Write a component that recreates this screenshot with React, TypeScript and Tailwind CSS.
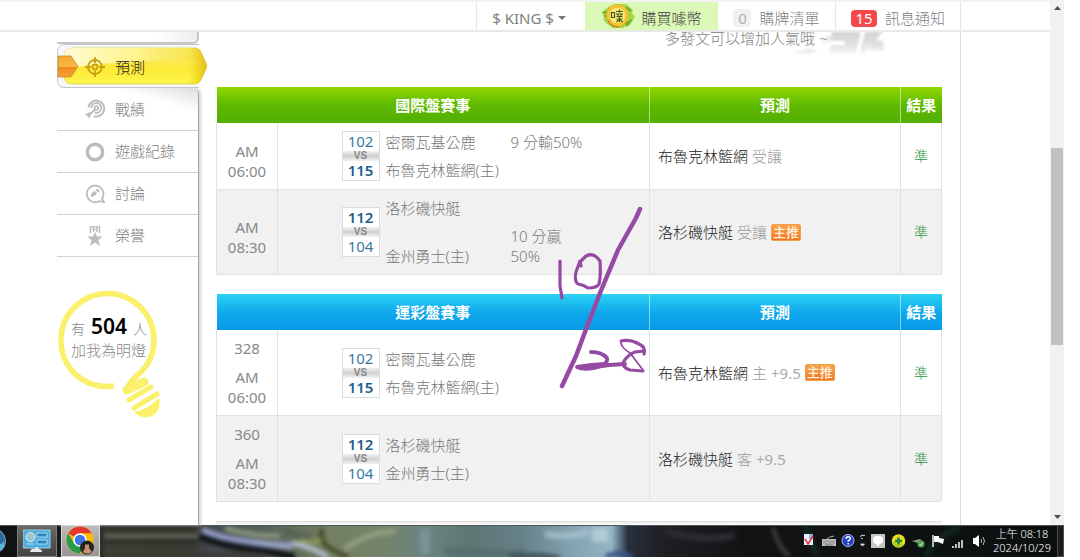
import React from "react";

type Match = {
  no?: string;
  time: string;
  away: string;
  home: string;
  awayScore: number;
  homeScore: number;
  note?: string;
  noteOnHome?: boolean;
  pick: string;
  side: string;
  line?: string;
  main?: boolean;
};

const international: Match[] = [
  { time: "06:00", away: "密爾瓦基公鹿", home: "布魯克林籃網(主)", awayScore: 102, homeScore: 115, note: "9 分輸50%", pick: "布魯克林籃網", side: "受讓" },
  { time: "08:30", away: "洛杉磯快艇", home: "金州勇士(主)", awayScore: 112, homeScore: 104, note: "10 分贏 50%", noteOnHome: true, pick: "洛杉磯快艇", side: "受讓", main: true },
];

const lottery: Match[] = [
  { no: "328", time: "06:00", away: "密爾瓦基公鹿", home: "布魯克林籃網(主)", awayScore: 102, homeScore: 115, pick: "布魯克林籃網", side: "主", line: "+9.5", main: true },
  { no: "360", time: "08:30", away: "洛杉磯快艇", home: "金州勇士(主)", awayScore: 112, homeScore: 104, pick: "洛杉磯快艇", side: "客", line: "+9.5" },
];

function CoinIcon() {
  return (
    <svg width="34" height="28" viewBox="0 0 34 28" aria-hidden="true">
      <path d="M1 10l6-5 8-3 10 0 7 6-1 3 3 4-4 6-8 5-10 0-6-4-4-5 1-2z" fill="#a5d84c" />
      <path d="M2 11l7-2M3 14l6 0M24 22l7-4M25 24l4-3M25 5l5 4" stroke="#6fae25" strokeWidth="2" />
      <circle cx="16.500" cy="13.500" r="11" fill="#f4cf35" stroke="#e0ac24" />
      <circle cx="16.500" cy="13.500" r="8.500" fill="#f8ea74" stroke="#ecb42a" />
      <path d="M7 18q3 7 11 7" stroke="#d97c1f" strokeWidth="1.500" fill="none" />
      <g stroke="#46521f" strokeWidth="1.200" fill="none">
        <path d="M10.500 10.500h3v5h-3zM15 9.500h7M18.500 7.500v3M15 12h7M15.500 14.500h6M17 12v3M20 12v3M18.500 15v5M15.500 17h6M15.500 20l2-2M21.500 20l-2-2" />
      </g>
    </svg>
  );
}

function Header() {
  return (
    <header className="relative z-20 flex h-8 justify-end border-t-2 border-b-2 border-t-[#f2f2f2] border-b-[#e9e9e9] bg-white pr-[89px] text-[15px] text-[#808080]">
      <nav className="flex" aria-label="會員選單">
        <button type="button" className="flex w-[109px] items-center justify-center gap-1 border-l border-[#e6e6e6] pt-1 pr-1 font-normal">
          $ KING $
          <svg width="8" height="4" viewBox="0 0 8 4" aria-hidden="true"><path d="M0 0h8L4 4z" fill="#777" /></svg>
        </button>
        <a href="#coins" className="flex w-[133px] items-center justify-center gap-1.5 bg-[#dcf8b6] text-[#444]">
          <CoinIcon />
          <span className="pt-1">購買噱幣</span>
        </a>
        <a href="#list" className="flex w-[117px] items-center justify-center gap-2 pt-1">
          <span className="w-[18px] rounded bg-[#f1f1f1] text-center leading-[18px] font-normal text-[#b0b0b0]">0</span>
          購牌清單
        </a>
        <a href="#messages" className="flex w-[126px] items-center justify-center gap-2 border-x border-[#e6e6e6] pt-1">
          <span className="w-[26px] rounded bg-[#f4484c] text-center leading-[17px] font-normal text-white">15</span>
          訊息通知
        </a>
      </nav>
    </header>
  );
}

function NavIcon({ name }: { name: string }) {
  return (
    <svg width="20" height="20" viewBox="0 0 20 20" fill="none" stroke="#bcbcbc" strokeWidth="1.800" className="shrink-0" aria-hidden="true">
      {name === "預測" && (
        <g stroke="#c9a211">
          <circle cx="10" cy="10" r="7" />
          <circle cx="10" cy="10" r="2.500" />
          <path d="M10 0v6M10 14v6M0 10h6M14 10h6" />
        </g>
      )}
      {name === "戰績" && (
        <g>
          <path d="M3.300 8.500a8 8 0 1 1 5.500 8.700" strokeWidth="2" />
          <path d="M6.300 9a5 5 0 1 1 3.500 4.700" />
          <circle cx="11.300" cy="9" r="1.800" />
          <path d="M10.500 10.500L5 15" />
          <path d="M0 15.500l5-2.500 1.500 1.500-2 5-1.500-2z" fill="#bcbcbc" stroke="none" />
        </g>
      )}
      {name === "遊戲紀錄" && <circle cx="10" cy="10" r="7.700" strokeWidth="3.500" />}
      {name === "討論" && (
        <g>
          <path d="M17 14.500A8.300 8.300 0 1 0 14 17.200l5 1z" />
          <path d="M5.500 13l1-3.500 3-2.800 2.600 2.600-3 2.900zM10.500 6l1.800-1.500L15 7l-1.800 1.600z" fill="#bcbcbc" stroke="none" />
        </g>
      )}
      {name === "榮譽" && (
        <g>
          <path d="M5.500 0v7M8.500 0v6M12 0v6M14.500 0v7" strokeWidth="1.500" />
          <path d="M6 1h8M8 3.500h4" strokeWidth="1" />
          <path d="M10 6l2 4.600h5.500l-4.200 3.600 1.700 5.800-5-3.500L5 20l1.700-5.800-4.200-3.600H8z" fill="#bcbcbc" stroke="none" />
        </g>
      )}
    </svg>
  );
}

function Ribbon() {
  return (
    <svg className="absolute top-0 left-0" width="152" height="44" viewBox="0 0 152 44" aria-hidden="true">
      <defs>
        <linearGradient id="gold" x1="0" y1="0" x2="0" y2="1">
          <stop offset="0" stopColor="#fff168" />
          <stop offset=".4" stopColor="#fdea4c" />
          <stop offset=".55" stopColor="#fdea38" />
          <stop offset="1" stopColor="#fdf54a" />
        </linearGradient>
        <linearGradient id="glow" x1="0" y1="0" x2="1" y2="0">
          <stop offset="0" stopColor="#fffcd8" />
          <stop offset=".5" stopColor="#fff79c" stopOpacity=".8" />
          <stop offset="1" stopColor="#f3d93a" stopOpacity=".5" />
        </linearGradient>
        <linearGradient id="tip" x1="0" y1="0" x2="1" y2="0">
          <stop offset="0" stopColor="#f0cf10" stopOpacity="0" />
          <stop offset="1" stopColor="#dcb40a" stopOpacity=".8" />
        </linearGradient>
        <linearGradient id="amber" x1="0" y1="0" x2="0" y2="1">
          <stop offset="0" stopColor="#f5a52e" />
          <stop offset=".5" stopColor="#fbb845" />
          <stop offset=".55" stopColor="#f08a1c" />
          <stop offset="1" stopColor="#f7a23a" />
        </linearGradient>
      </defs>
      <path d="M142 .5H8Q.5.500.5 8v28q0 7.500 7.500 7.500h134" fill="#f8f8fa" stroke="#c3c6cc" />
      <path d="M16 4h122q4 0 6 4l5 11q1.500 3 0 6l-5 11q-2 4-6 4H16q-9 0-9-9V13q0-9 9-9z" fill="url(#gold)" stroke="#dccb4a" strokeWidth=".8" />
      <path d="M16 4h122q4 0 6 4l4 9Q70 14 7 25V13q0-9 9-9z" fill="url(#glow)" />
      <path d="M130 4h8q4 0 6 4l5 11q1.500 3 0 6l-5 11q-2 4-6 4h-8z" fill="url(#tip)" />
      <path d="M1 12h13l7 10.500L14 33H1z" fill="url(#amber)" stroke="#c88a2c" strokeWidth=".8" />
    </svg>
  );
}

function Bulb() {
  return (
    <section className="relative mt-8 h-[128px] pt-[26px] pl-[14px] text-[#888]">
      <svg className="absolute top-0 left-0" width="106" height="130" viewBox="0 0 106 130" fill="none" stroke="#fbf06c" strokeWidth="5.500" aria-hidden="true">
        <path d="M57 97C26 101 4 78 4 51C4 25 25 4.500 50.500 4.500C76 4.500 97 25 97 51C97 66 91 76 84 83Q74 91 69 101" />
        <path d="M70 101l17-8" strokeWidth="9" strokeLinecap="round" />
        <path d="M72 111l22-13M77 119l23-14" strokeWidth="5" strokeLinecap="round" />
        <path d="M77 123q13-2 25-14 3 12-7 18-10 4-18-4z" fill="#fbf06c" stroke="none" />
      </svg>
      <p className="relative flex items-baseline gap-[6px] text-[14px] leading-[22px]">
        有 <strong className="text-[21px] font-semibold text-black">504</strong> 人
      </p>
      <p className="relative leading-5">加我為明燈</p>
    </section>
  );
}

function Sidebar() {
  return (
    <aside className="relative z-10 flex w-[142px] shrink-0 flex-col text-[15px] text-[#808080]">
      <div className="h-[12px] rounded-br-md border-r-2 border-b-2 border-[#c6c6c9] bg-linear-to-r from-white from-70% to-[#eeeef2]" />
      <nav aria-label="個人選單" className="contents">
        <a href="#predict" className="relative flex h-[44px] w-[152px] items-center text-[#222]">
          <Ribbon />
          <span className="relative flex items-center gap-[10px] pt-0.5 pl-[28px]">
            <NavIcon name="預測" />
            預測
          </span>
        </a>
        <div className="flex flex-1 flex-col rounded-tr-md border-r border-[#a9a9a9] bg-white shadow-[2px_0_3px_#d4d4d4]">
          {["戰績", "遊戲紀錄", "討論", "榮譽"].map((label, i) => (
            <a
              key={label}
              href={"#" + label}
              className={
                "flex items-center gap-[10px] border-b border-[#d2d2d2] pl-[28px] " +
                (i === 0 ? "h-[43px] rounded-tr-md bg-linear-to-bl from-[#dedee2] to-white to-30%" : "h-[42px]")
              }
            >
              <NavIcon name={label} />
              {label}
            </a>
          ))}
          <Bulb />
        </div>
      </nav>
    </aside>
  );
}

function ScoreBox({ top, bottom }: { top: number; bottom: number }) {
  return (
    <div className="w-[38px] shrink-0 border border-[#d9dde0] bg-white text-center">
      <div className={"leading-[19px] " + (top > bottom ? "font-semibold text-[#1d5f8c]" : "font-normal text-[#3c7a9f]")}>{top}</div>
      <div className="bg-linear-to-b from-[#f2f2f2] via-[#cfcfcf] to-[#f2f2f2] font-['Liberation_Sans'] text-[10px] leading-[10px] font-bold text-[#888]">VS</div>
      <div className={"leading-[19px] " + (bottom > top ? "font-semibold text-[#1d5f8c]" : "font-normal text-[#3c7a9f]")}>{bottom}</div>
    </div>
  );
}

function MatchTable({ title, rows, blue }: { title: string; rows: Match[]; blue?: boolean }) {
  return (
    <table className="w-full table-fixed border-collapse text-[15px] leading-5 text-[#777]">
      <colgroup>
        <col className="w-[61px]" />
        <col />
        <col className="w-[251px]" />
        <col className="w-[41px]" />
      </colgroup>
      <thead>
        <tr
          className={
            "h-9 text-white " +
            (blue
              ? "bg-linear-to-b from-[#2bd3f3] via-[#10a9ec] to-[#0799e6]"
              : "bg-linear-to-b from-[#91d800] via-[#5eb900] to-[#53af02]")
          }
        >
          <th colSpan={2} scope="colgroup" className="font-bold">{title}</th>
          <th scope="col" className="border-l border-white/50 font-bold">預測</th>
          <th scope="col" className="border-l border-white/50 font-bold">結果</th>
        </tr>
      </thead>
      <tbody>
        {rows.map((m) => (
          <tr key={m.time} className="even:bg-[#f1f1f1]">
            <td className="border border-t-0 border-[#e2e2e2] py-2 text-center font-normal text-[#888]">
              <div className="mb-[9px]">{m.no}</div>
              AM
              <br />
              {m.time}
            </td>
            <td className="border border-t-0 border-[#e2e2e2] py-2">
              <div className="flex items-center justify-center gap-[6px]">
                <ScoreBox top={m.awayScore} bottom={m.homeScore} />
                <div className="grid grid-cols-[125px_75px] items-end gap-y-2">
                  <span>{m.away}</span>
                  <span className="whitespace-nowrap">{!m.noteOnHome && m.note}</span>
                  <span>{m.home}</span>
                  <span>{m.noteOnHome && m.note}</span>
                </div>
              </div>
            </td>
            <td className="border border-t-0 border-[#e2e2e2] px-2">
              <div className="flex items-center gap-1">
                <span className="text-[#222]">{m.pick}</span>
                <span className="text-[#999]">{m.side}</span>
                {m.line && <span className="font-normal text-[#aaa]">{m.line}</span>}
                {m.main && (
                  <span className="rounded-xs border border-[#f3a04b] bg-linear-to-b from-[#f9a348] to-[#ef7420] px-px text-[13px] leading-[15px] font-medium text-[#fff3df]">
                    主推
                  </span>
                )}
              </div>
            </td>
            <td className="border border-t-0 border-[#e2e2e2] text-center text-[14px] text-[#2f9343]">準</td>
          </tr>
        ))}
      </tbody>
    </table>
  );
}

function Watermark() {
  return (
    <svg className="absolute top-0 right-[74px] blur-[1px]" width="94" height="26" viewBox="0 0 94 26" aria-hidden="true">
      <defs>
        <linearGradient id="fade" x1="0" y1="0" x2="0" y2="1">
          <stop offset="0" stopColor="#d3d3d3" />
          <stop offset=".6" stopColor="#e2e2e2" />
          <stop offset="1" stopColor="#fafafa" />
        </linearGradient>
      </defs>
      <g fill="url(#fade)">
        <path d="M40 0h29l-5 22H36l3-9h13l1-4H38z" />
        <path d="M73 0h18l-7 7 8 3-1 9H77l1-8-4 11h-7z" />
        <path d="M2 20l14-4 10 3-8 4H6z" opacity=".5" />
        <path d="M34 4h6l-3 8h-8z" opacity=".6" />
      </g>
    </svg>
  );
}

function HandwrittenDate() {
  return (
    <svg className="pointer-events-none absolute top-[206px] left-[552px] z-30" width="98" height="184" viewBox="0 0 98 184" fill="none" stroke="#954ba3" strokeWidth="3.200" strokeLinecap="round" strokeLinejoin="round" role="img" aria-label="10/28">
      <path d="M88 3L84 12L66 44L48 87L33 126L24 150L10 180" strokeWidth="4.500" />
      <path d="M8 55v25l2 12" />
      <path d="M29 60L28 55L24 66Q22 75 26 78Q32 79 36 82Q45 82 47 78Q49 70 48 55Q42 46 34 50L28 56" />
      <path d="M39 146Q50 146 55 152Q56 156 52 158L40 159L25 161Q33 165 50 160L57 159L73 158" strokeWidth="3.800" />
      <path d="M92 148Q94 141 87 138Q78 133 69 135" />
      <path d="M69 135Q68 141 78 147L91 164" strokeWidth="1.800" />
      <path d="M91 165L78 164Q69 161 72 155Q77 148 83 146L92 145" />
    </svg>
  );
}

function Scrollbar() {
  return (
    <div className="flex w-[14px] shrink-0 flex-col items-center bg-[#f1f1f1] py-[6px]" aria-hidden="true">
      <svg width="7" height="4" viewBox="0 0 7 4"><path d="M0 4h7L3.500 0z" fill="#505050" /></svg>
      <div className="flex w-full flex-1 flex-col px-px">
        <div className="flex-[138]" />
        <div className="flex-[197] bg-[#c1c1c1]" />
        <div className="flex-[170]" />
      </div>
      <svg width="7" height="4" viewBox="0 0 7 4"><path d="M0 0h7L3.500 4z" fill="#505050" /></svg>
    </div>
  );
}

function Wallpaper() {
  return (
    <svg className="absolute inset-0 h-full w-full" viewBox="0 0 1064 32" preserveAspectRatio="none" aria-hidden="true">
      <defs>
        <linearGradient id="scene" gradientUnits="userSpaceOnUse" x1="0" y1="0" x2="1064" y2="0">
          <stop offset="0" stopColor="#0e1112" />
          <stop offset=".09" stopColor="#1d1e1b" />
          <stop offset=".1" stopColor="#3d3e34" />
          <stop offset=".18" stopColor="#3a3b34" />
          <stop offset=".2" stopColor="#454b50" />
          <stop offset=".27" stopColor="#5f6b5c" />
          <stop offset=".31" stopColor="#747f60" />
          <stop offset=".36" stopColor="#73836b" />
          <stop offset=".4" stopColor="#6c8481" />
          <stop offset=".44" stopColor="#5d7673" />
          <stop offset=".49" stopColor="#658088" />
          <stop offset=".54" stopColor="#84a4b2" />
          <stop offset=".575" stopColor="#94b4c3" />
          <stop offset=".59" stopColor="#28303f" />
          <stop offset=".62" stopColor="#1f2023" />
          <stop offset=".7" stopColor="#121315" />
          <stop offset="1" stopColor="#0b100f" />
        </linearGradient>
        <filter id="soft" filterUnits="userSpaceOnUse" x="0" y="-10" width="1064" height="52" colorInterpolationFilters="sRGB"><feGaussianBlur stdDeviation="2" /></filter>
      </defs>
      <rect width="1064" height="32" fill="url(#scene)" />
      <g filter="url(#soft)" fill="none">
        <path d="M105 4h90M105 17h92" stroke="#2a2b24" strokeWidth="3" />
        <path d="M105 11h95" stroke="#86877a" strokeWidth="2" />
        <path d="M202 5q20 9 45 12t45 4" stroke="#98a3cd" strokeWidth="6" />
        <path d="M225 3q25 8 55 8" stroke="#8a977f" strokeWidth="5" />
        <path d="M199 11q18 8 46 12t50 9" stroke="#101317" strokeWidth="7" />
        <path d="M195 32q40-4 70 0" stroke="#3c3d3a" strokeWidth="8" />
        <path d="M292 18q20 4 36 14" stroke="#b3bfcd" strokeWidth="5" />
        <path d="M285 4q12 9 26 8" stroke="#4e5b4c" strokeWidth="3" />
        <path d="M322 4q-2 8 2 14t24 14" stroke="#3e4020" strokeWidth="4" />
        <path d="M300 15q12 4 22 0" stroke="#a0a557" strokeWidth="3" />
        <path d="M345 24q20-16 50-18" stroke="#8f9d7e" strokeWidth="6" />
        <path d="M425 4v24" stroke="#829fa9" strokeWidth="10" opacity=".6" />
        <path d="M445 26q30 2 80 2" stroke="#516a68" strokeWidth="7" opacity=".7" />
        <path d="M510 32q35-4 50 2" stroke="#3c5059" strokeWidth="5" />
        <path d="M545 9q20 4 45-2" stroke="#abc7d2" strokeWidth="7" opacity=".7" />
        <path d="M592 10h16" stroke="#c0d9e2" strokeWidth="14" opacity=".7" />
        <path d="M606 32q16-8 27 3" stroke="#3a5589" strokeWidth="5" />
        <path d="M665 6q40 12 70 4" stroke="#2b2d31" strokeWidth="7" />
        <path d="M773 3q6 20 16 28" stroke="#4c4f50" strokeWidth="3" />
        <path d="M805 0l12 32M925 32q10-20 35-30" stroke="#12291f" strokeWidth="6" />
      </g>
      <path d="M0 .5h1064" stroke="#4c5558" />
    </svg>
  );
}

function ChromeIcon() {
  return (
    <svg width="30" height="30" viewBox="0 0 30 30" aria-hidden="true">
      <circle cx="14" cy="14" r="13.500" fill="#fbbc05" />
      <path d="M14 14L2.300 7.300A13.500 13.500 0 0 1 25.700 7.300H14z" fill="#e4382b" />
      <path d="M2.300 7.300A13.500 13.500 0 0 0 14 27.500l5.800-10.200L8.200 17.500z" fill="#279b4a" />
      <circle cx="14" cy="14" r="6.800" fill="#fff" />
      <circle cx="14" cy="14" r="5.300" fill="#3b78e7" />
      <circle cx="21" cy="21.500" r="7" fill="#2b2523" />
      <path d="M19 18q2-2 4 0v4l3 4q-5 3-9 0l2-4z" fill="#c69474" />
      <path d="M18.500 18q2.500-4 5 0l-1 .5h-3z" fill="#15110f" />
    </svg>
  );
}

function Tray() {
  return (
    <div className="flex items-center gap-[5px]" aria-hidden="true">
      <svg width="13" height="14" viewBox="0 0 13 14">
        <path d="M0 0h9v11H0z" fill="#e9eef8" /><path d="M5 0h4v5H5z" fill="#94b7e6" /><path d="M1 5l3 5L9 2" stroke="#e13a3a" strokeWidth="1.500" fill="none" />
      </svg>
      <svg width="14" height="14" viewBox="0 0 14 14">
        <path d="M0 5h14v7H0z" fill="#bfc0bf" /><path d="M1.500 7h11M1.500 9h11" stroke="#555" strokeDasharray="1 1" /><path d="M3 11h8" stroke="#666" /><path d="M5 5q1-2 7-3" stroke="#aaa" fill="none" />
      </svg>
      <svg width="14" height="14" viewBox="0 0 14 14">
        <circle cx="7" cy="6.500" r="6" fill="#2440c6" stroke="#b5c2ef" /><path d="M5 5q0-2.200 2.200-2.200T9.300 4.700Q9.300 6 7.200 6.800v1M7.200 9v1.500" stroke="#fff" strokeWidth="1.500" fill="none" />
      </svg>
      <svg width="5" height="14" viewBox="0 0 5 14">
        <path d="M0 2.500q2-2 5-1M1 4.500h2M.5 10h4l-2 2z" stroke="#ddd" fill="#ddd" strokeWidth=".8" />
      </svg>
      <svg width="16" height="14" viewBox="0 0 16 14">
        <path d="M1 0h14v14H1z" fill="#c4c5c4" /><rect x="3" y="2" width="10" height="8" rx="4" fill="#fff" /><path d="M6 9l2 4 2-4z" fill="#fff" />
      </svg>
      <svg width="15" height="14" viewBox="0 0 15 14">
        <circle cx="7.500" cy="7" r="6.800" fill="#e5df1d" /><path d="M1 7a6.500 6.500 0 0 0 12 3L7 11z" fill="#a6cb20" /><path d="M7.500 3.500v7M4 7h7" stroke="#198343" strokeWidth="2.500" />
      </svg>
      <svg width="16" height="14" viewBox="0 0 16 14">
        <path d="M1 7l8-2 2 2-4 2z" fill="#8e9490" /><circle cx="10" cy="10" r="3.500" fill="#4ea64c" /><path d="M8.500 10l1.200 1.300 2-2.800" stroke="#dff5d8" fill="none" />
      </svg>
      <svg width="15" height="14" viewBox="0 0 15 14">
        <path d="M1 1v12" stroke="#eee" strokeWidth="1.500" /><path d="M2 2h5v2l5 1-1 5-5-2H2z" fill="#fff" />
      </svg>
      <svg width="15" height="14" viewBox="0 0 15 14" stroke="#eee" strokeWidth="1.600">
        <path d="M1 12v2M4 10v4M7 8v6M10 6v8" />
      </svg>
      <svg width="15" height="14" viewBox="0 0 15 14">
        <path d="M1 4h2l4-3v12l-4-3H1z" fill="#fff" /><path d="M9 5q1.500 2 0 4M11 3q3 4 0 8" stroke="#bbb" fill="none" />
      </svg>
    </div>
  );
}

function Taskbar() {
  return (
    <footer className="relative h-8 overflow-hidden text-white">
      <Wallpaper />
      <div className="relative flex h-full items-stretch">
        <button type="button" aria-label="開始" className="flex w-[17px] items-center">
          <svg width="7" height="26" viewBox="0 0 7 26" aria-hidden="true">
            <circle cx="-7" cy="13" r="12.500" fill="#286b9d" stroke="#8fa8b5" /><path d="M0 16q4-1 4-4v8l-4 3z" fill="#54b4d8" />
          </svg>
        </button>
        <button type="button" aria-label="控制台" className="flex w-[40px] items-center justify-center border border-[#7b7b79] bg-linear-to-b from-[#6c6964] to-[#454340]">
          <svg width="28" height="24" viewBox="0 0 28 24" aria-hidden="true">
            <path d="M0 1h27v18H0z" fill="#4facdf" stroke="#97d2ec" />
            <circle cx="7.500" cy="8" r="4.500" fill="#9bc6ce" stroke="#d9eef4" />
            <path d="M14 4h10v4H14zM14 11h10v4H14zM3 15h8" stroke="#a5dcf2" fill="#2c84bb" />
            <path d="M7 23q1-4 4-3 3-4 5 0 3 0 3 3z" fill="#e8e9ec" />
          </svg>
        </button>
        <button type="button" aria-label="Chrome" className="ml-1 flex w-[39px] items-center justify-center border border-[#dadada] bg-linear-to-b from-[#bdbbb9] to-[#989593]">
          <ChromeIcon />
        </button>
        <div className="ml-auto flex items-center">
          <Tray />
          <div className="w-[70px] text-center text-[11px] leading-[14px]">
            <div>上午 08:18</div>
            <div>2024/10/29</div>
          </div>
          <button type="button" aria-label="顯示桌面" className="h-full w-[7px] border border-[#4c4c4c] bg-[#1a1d1d]" />
        </div>
      </div>
    </footer>
  );
}

export default function App() {
  return (
    <div lang="zh-Hant" className="relative flex min-h-screen flex-col bg-white pr-4 pb-[3px] font-['Noto_Sans','Noto_Sans_CJK_TC',sans-serif] font-light">
      <div className="flex flex-1">
        <div className="flex min-w-0 flex-1 flex-col">
          <Header />
          <div className="flex flex-1 pr-[89px] pl-[57px]">
            <Sidebar />
            <main className="relative flex min-w-0 flex-1 flex-col border-r border-[#dcdcdc] pr-[18px] pl-[17px]">
              <Watermark />
              <p className="relative -mt-1 pb-[39px] pl-[449px] text-[15px] leading-5 whitespace-nowrap text-[#808080]">多發文可以增加人氣哦 ~</p>
              <div className="flex flex-col gap-[19px]">
                <MatchTable title="國際盤賽事" rows={international} />
                <MatchTable title="運彩盤賽事" rows={lottery} blue />
                <div className="h-[3px] border-t border-[#ddd] bg-[#f1f1f1]" />
              </div>
            </main>
          </div>
        </div>
        <Scrollbar />
      </div>
      <HandwrittenDate />
      <Taskbar />
    </div>
  );
}
